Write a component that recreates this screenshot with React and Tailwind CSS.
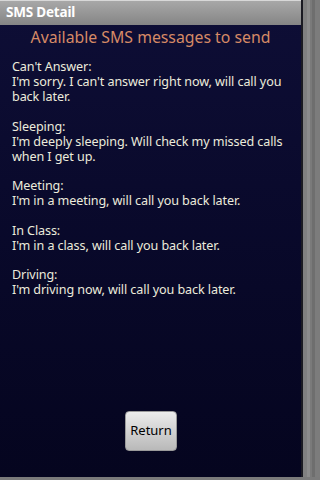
export default function App() {
  const items = [
    ["Can't Answer:", "I'm sorry. I can't answer right now, will call you back later."],
    ["Sleeping:", "I'm deeply sleeping. Will check my missed calls when I get up."],
    ["Meeting:", "I'm in a meeting, will call you back later."],
    ["In Class:", "I'm in a class, will call you back later."],
    ["Driving:", "I'm driving now, will call you back later."],
  ];
  return (
    <div className="w-[320px] h-[480px] bg-[#7b7b7b] flex flex-col overflow-hidden" style={{ fontFamily: '"Noto Sans", "Open Sans", sans-serif' }}>
      <div className="flex flex-1">
        <div className="w-[301px] flex flex-col bg-gradient-to-b from-[#0e0e36] to-[#05051f]">
          <div className="h-[25px] border-t border-[#d8d8d8] bg-gradient-to-b from-[#a8a8a8] to-[#858585] flex items-center pl-[6px]">
            <span className="text-white font-bold text-[13.5px] leading-none tracking-[-0.2px]">SMS Detail</span>
          </div>
          <div className="text-center text-[#d68a66] text-[15.8px] leading-[22px] mt-[1px]">Available SMS messages to send</div>
          <div className="pl-[12px] pr-[6px] mt-[11px] text-[#ecebdc] text-[12.6px] tracking-[-0.1px] leading-[15px] flex flex-col gap-[14.6px]">
            {items.map(([t, m]) => (
              <div key={t}>
                <div>{t}</div>
                <div>{m}</div>
              </div>
            ))}
          </div>
          <div className="flex-1" />
          <div className="flex justify-center pb-[26px] pl-[1px]">
            <button className="w-[52px] h-[40px] rounded-[4px] bg-gradient-to-b from-[#ececec] to-[#b9b9b9] text-black text-[13px] border border-[#9a9a9a]">Return</button>
          </div>
        </div>
        <div className="w-[2px] bg-[#1a1a22]" />
        <div className="flex-1 flex">
          <div className="w-[4px] bg-[#808080]" />
          <div className="w-[3px] bg-[#8c8c8c]" />
          <div className="flex-1 bg-[#7a7a7a]" />
          <div className="w-[3px] bg-[#6e6e6e]" />
          <div className="w-[5px] bg-[#7c7c7c]" />
        </div>
      </div>
      <div className="h-[3px] bg-[#7b7b7b]" />
    </div>
  );
}
